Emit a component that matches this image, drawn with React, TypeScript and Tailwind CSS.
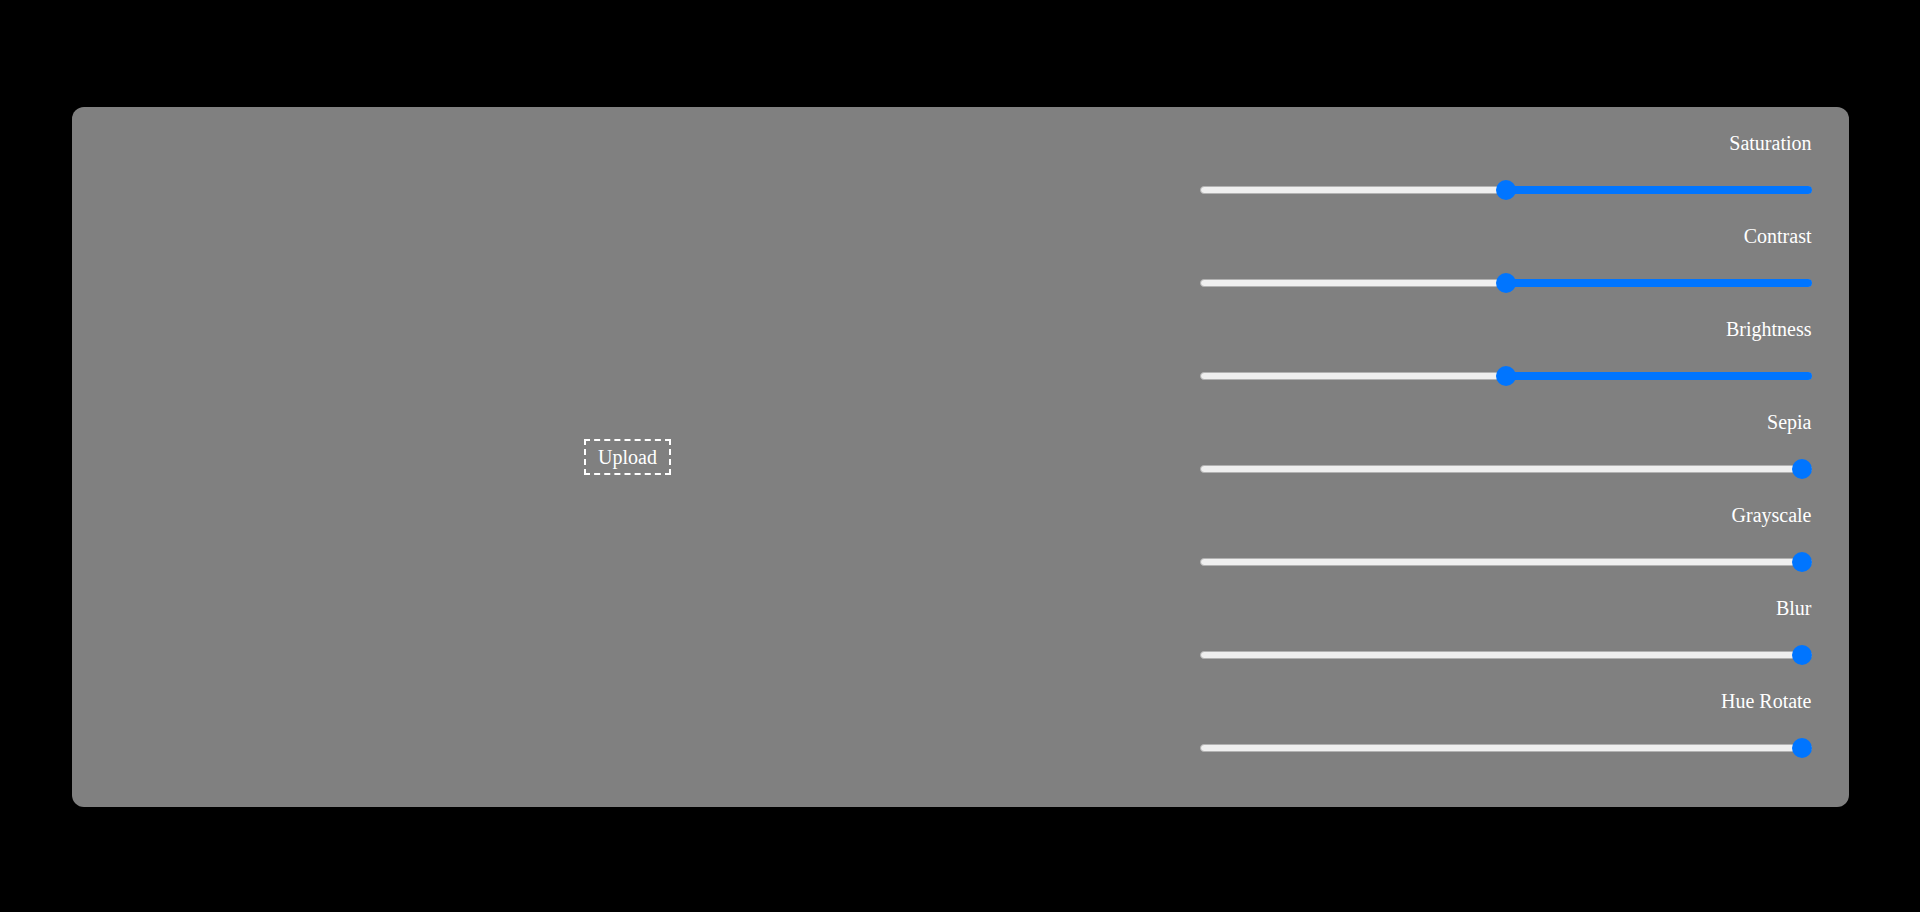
import React from 'react'

// filter controls: label on top, slider below (fill runs from the right, like a rtl range)
const filters = [
  { name: 'Saturation', value: 50 },
  { name: 'Contrast', value: 50 },
  { name: 'Brightness', value: 50 },
  { name: 'Sepia', value: 0 },
  { name: 'Grayscale', value: 0 },
  { name: 'Blur', value: 0 },
  { name: 'Hue Rotate', value: 0 },
]

const TRACK = 612
const THUMB = 20

function Slider({ value }: { value: number }) {
  // thumb center measured from the right edge
  const center = THUMB / 2 + ((TRACK - THUMB) * value) / 100
  return (
    <div className="relative h-[20px] w-[612px]">
      <div className="absolute left-0 right-0 top-[6px] h-[8px] rounded-full border border-[#b2b2b2] bg-[#efefef]" />
      {value > 0 && (
        <div
          className="absolute right-0 top-[6px] h-[8px] rounded-full bg-[#0075ff]"
          style={{ width: center }}
        />
      )}
      <div
        className="absolute top-0 h-[20px] w-[20px] rounded-full bg-[#0075ff]"
        style={{ right: center - THUMB / 2 }}
      />
    </div>
  )
}

export default function App() {
  return (
    <div className="flex h-[912px] w-[1920px] items-center justify-center bg-black text-white [font-family:'Liberation_Serif','Times_New_Roman',serif]">
      <div className="mt-[2px] flex h-[700px] w-[1777px] items-center rounded-[12px] bg-[#808080]">
        {/* Upload area */}
        <div className="flex h-full flex-1 items-center justify-center">
          <button className="flex h-[36px] items-center border-2 border-dashed border-white px-[12px] text-[20px] leading-[23px] text-white [font-family:'Liberation_Serif','Times_New_Roman',serif]">
            Upload
          </button>
        </div>

        {/* Sliders */}
        <div className="ml-[16px] mr-[37px] flex w-[612px] flex-col">
          {filters.map((f) => (
            <div key={f.name} className="flex h-[93px] flex-col">
              <div className="h-[23px] text-right text-[20px] leading-[23px]">{f.name}</div>
              <div className="mt-[25px]">
                <Slider value={f.value} />
              </div>
            </div>
          ))}
        </div>
      </div>
    </div>
  )
}
